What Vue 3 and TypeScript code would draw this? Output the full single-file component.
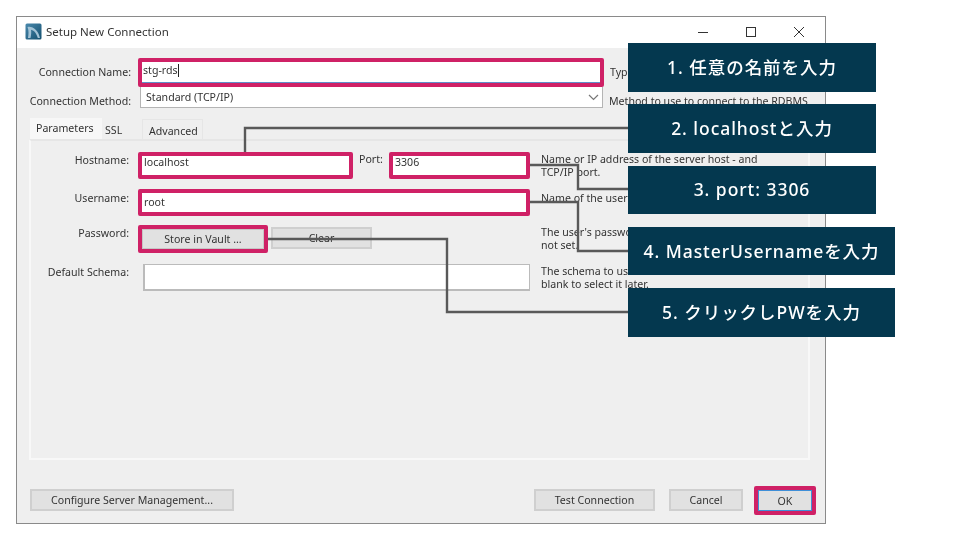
<template>
  <div class="page">
    <div class="window">
      <div class="title-bar">
        <svg class="app-icon" width="17" height="17" viewBox="0 0 17 17">
          <defs>
            <linearGradient id="iconBg" x1="0" y1="0" x2="1" y2="1">
              <stop offset="0" stop-color="#4a89ad" />
              <stop offset="1" stop-color="#14506f" />
            </linearGradient>
          </defs>
          <rect x="0.5" y="0.5" width="16" height="16" rx="1.5" fill="url(#iconBg)" />
          <path d="M3 15 C3.5 11 4 8 2.5 4 C8 3 13 7 15 15 L12.8 15 C11.5 11 9.5 7.5 6 6.8 C6.5 9 6.2 12 5.5 15 Z" fill="#a3c3d6" />
        </svg>
        <span class="title">Setup New Connection</span>
        <div class="win-buttons">
          <svg width="12" height="12" viewBox="0 0 12 12"><path d="M1 6.5H11" stroke="#333" fill="none" /></svg>
          <svg width="12" height="12" viewBox="0 0 12 12"><rect x="1.5" y="1.5" width="9" height="9" stroke="#333" fill="none" /></svg>
          <svg width="12" height="12" viewBox="0 0 12 12"><path d="M1 1L11 11M11 1L1 11" stroke="#333" fill="none" /></svg>
        </div>
      </div>

      <div class="body">
        <div class="top-form">
          <label class="top-label">Connection Name:</label>
          <div class="name-input">stg-rds<i class="caret"></i></div>
          <span class="top-hint">Type a name for the connection</span>
          <label class="top-label lower">Connection Method:</label>
          <div class="combo">
            <span>Standard (TCP/IP)</span>
            <svg width="11" height="7" viewBox="0 0 11 7"><path d="M1 1L5.5 5.5L10 1" stroke="#777" stroke-width="1.2" fill="none" /></svg>
          </div>
          <span class="top-hint lower">Method to use to connect to the RDBMS</span>
        </div>

        <div class="tabs">
          <div class="tab active">Parameters</div>
          <div class="tab ssl">SSL</div>
          <div class="tab advanced">Advanced</div>
        </div>

        <div class="panel">
          <div class="params">
            <label class="field-label">Hostname:</label>
            <div class="host-row">
              <div class="input marked host">localhost</div>
              <label class="port-label">Port:</label>
              <div class="input marked port">3306</div>
            </div>
            <div class="hint">Name or IP address of the server host - and<br />TCP/IP port.</div>

            <label class="field-label user-label">Username:</label>
            <div class="input marked user">root</div>
            <div class="hint user-hint">Name of the user to connect with.</div>

            <label class="field-label">Password:</label>
            <div class="pass-row">
              <button class="btn store">Store in Vault ...</button>
              <button class="btn clear">Clear</button>
            </div>
            <div class="hint">The user's password. Will be requested later if it's<br />not set.</div>

            <label class="field-label">Default Schema:</label>
            <div class="input schema"></div>
            <div class="hint">The schema to use as default schema. Leave<br />blank to select it later.</div>
          </div>
        </div>

        <div class="footer">
          <button class="btn configure">Configure Server Management...</button>
          <button class="btn test">Test Connection</button>
          <button class="btn cancel">Cancel</button>
          <button class="btn ok">OK</button>
        </div>
      </div>
    </div>

    <!-- 引き出し線 -->
    <svg class="leaders" width="960" height="540" viewBox="0 0 960 540">
      <path v-for="(d, index) in leaders" :key="index" :d="d" />
    </svg>

    <div class="callouts">
      <div v-for="item in callouts" :key="item.text" class="callout" :class="{ wide: item.wide }">{{ item.text }}</div>
    </div>
  </div>
</template>

<script setup lang="ts">
interface Callout {
  text: string
  wide?: boolean
}

const callouts: Callout[] = [
  { text: "1. 任意の名前を入力" },
  { text: "2. localhostと入力" },
  { text: "3. port: 3306" },
  { text: "4. MasterUsernameを入力", wide: true },
  { text: "5. クリックしPWを入力", wide: true },
]

const leaders: string[] = [
  "M245 152V128H628",
  "M530 165H578V189H628",
  "M530 202H578V251H628",
  "M268 239H447V312H628",
]
</script>

<style>
html,
body {
  background: #ffffff;
}
</style>

<style scoped>
.page {
  position: relative;
  width: 960px;
  height: 540px;
  padding: 16px;
  box-sizing: border-box;
  overflow: hidden;
  background: #ffffff;
  font-family: "Noto Sans", "Liberation Sans", sans-serif;
  font-size: 10.6px;
  color: #333333;
  filter: blur(0.35px);
}

.window {
  width: 810px;
  height: 508px;
  box-sizing: border-box;
  border: 1px solid #8a8a8a;
  display: flex;
  flex-direction: column;
  background: #efefef;
}

.title-bar {
  height: 31px;
  flex: none;
  background: #ffffff;
  display: flex;
  align-items: center;
  padding: 0 0 2px 8px;
  box-sizing: border-box;
}

.app-icon {
  margin-right: 4px;
}

.title {
  font-size: 11.5px;
  color: #333333;
}

.win-buttons {
  margin-left: auto;
  margin-right: 20px;
  display: flex;
  gap: 36px;
}

.body {
  flex: 1;
  display: flex;
  flex-direction: column;
  min-height: 0;
}

.top-form {
  margin-top: 9px;
  display: grid;
  grid-template-columns: 114px 466px 1fr;
  grid-template-rows: 30px 21px;
  align-items: center;
}

.top-label {
  text-align: right;
  white-space: nowrap;
}

.name-input {
  margin-left: 7px;
  width: 466px;
  height: 29px;
  box-sizing: border-box;
  border: 4px solid #cf2166;
  border-radius: 2px;
  background: #ffffff;
  box-shadow: inset 0 -1px 0 #5f8fca;
  line-height: 16px;
  padding-left: 1px;
}

.caret {
  display: inline-block;
  width: 1px;
  height: 13px;
  background: #222222;
  vertical-align: -3px;
}

.combo {
  margin-left: 9px;
  width: 463px;
  height: 21px;
  box-sizing: border-box;
  border: 1px solid #b4b4b4;
  border-width: 0 1px 1px 1px;
  background: #ffffff;
  display: flex;
  align-items: center;
  justify-content: space-between;
  padding: 0 3px 0 5px;
}

.top-hint {
  white-space: nowrap;
  margin-left: 13px;
}

.lower {
  position: relative;
  top: 3px;
}

.top-hint.lower {
  margin-left: 12px;
}

.tabs {
  display: flex;
  margin: 10px 0 0 13px;
  height: 21px;
  flex: none;
}

.tab {
  box-sizing: border-box;
  line-height: 20px;
}

.tab.active {
  width: 72px;
  background: #f7f7f7;
  padding-left: 6px;
}

.tab.ssl {
  width: 41px;
  margin-top: 1px;
  padding: 1px 0 0 3px;
  border-right: 1px solid #e6e6e6;
}

.tab.advanced {
  width: 60px;
  margin-top: 1px;
  padding: 1px 0 0 6px;
  border: 1px solid #e6e6e6;
  border-width: 1px 1px 0 0;
}

.panel {
  flex: 1;
  margin: 0 15px 0 12px;
  border: 2px solid #f8f8f8;
  border-top-color: #e6e6e6;
  padding-top: 11px;
  box-sizing: border-box;
  min-height: 0;
}

.params {
  display: grid;
  grid-template-columns: 98px 392px 1fr;
  column-gap: 0;
  grid-template-rows: 37px 36px 39px 27px;
  align-items: start;
}

.field-label {
  text-align: right;
  line-height: 16px;
  white-space: nowrap;
}

.user-label {
  line-height: 18px;
}

.host-row,
.pass-row {
  display: flex;
  align-items: flex-start;
  margin-left: 9px;
  width: 392px;
}

.input {
  height: 27px;
  box-sizing: border-box;
  background: #ffffff;
  line-height: 13px;
  padding-left: 2px;
}

.input.marked {
  margin-left: 9px;
  width: 392px;
  border: 4px solid #cf2166;
  border-radius: 2px;
}

.input.user {
  line-height: 18px;
}

.input.host {
  margin-left: 0;
  width: 215px;
  flex: none;
}

.port-label {
  width: 30px;
  margin-left: 6px;
  line-height: 15px;
  flex: none;
}

.input.port {
  margin-left: 0;
  width: 141px;
  flex: none;
}

.input.schema {
  margin-left: 14px;
  width: 387px;
  border: 2px solid #bbbbbb;
  border-width: 1px 1px 2px 2px;
}

.hint {
  margin: 1px 0 0 20px;
  line-height: 13px;
  white-space: nowrap;
}

.user-hint {
  margin-top: 3px;
}

.btn {
  font: inherit;
  color: inherit;
  background: #e1e1e1;
  border: 2px solid #cfcfcf;
  padding: 0;
  height: 22px;
  box-sizing: border-box;
}

.btn.store {
  width: 130px;
  height: 28px;
  border: 4px solid #cf2166;
  border-radius: 2px;
  box-shadow: inset 0 0 0 1px #c6c6c6;
}

.btn.clear {
  width: 101px;
  margin: 2px 0 0 3px;
}

.footer {
  display: flex;
  align-items: flex-start;
  flex: none;
  height: 22px;
  margin: 29px 0 12px 13px;
}

.btn.configure {
  width: 204px;
  margin-right: auto;
}

.btn.test {
  width: 121px;
  margin-right: 14px;
}

.btn.cancel {
  width: 74px;
  margin-right: 11px;
}

.btn.ok {
  width: 62px;
  height: 29px;
  margin: -3px 9px 0 0;
  border: 4px solid #cf2166;
  border-radius: 2px;
  box-shadow: inset 0 0 0 1px #3f8fd8;
}

.leaders {
  position: absolute;
  left: 0;
  top: 0;
}

.leaders path {
  fill: none;
  stroke: #595959;
  stroke-width: 2.4;
}

.callouts {
  position: absolute;
  left: 628px;
  top: 43px;
  display: flex;
  flex-direction: column;
  align-items: flex-start;
  gap: 12.75px;
}

.callout {
  width: 248px;
  height: 48.5px;
  box-sizing: border-box;
  padding-bottom: 2px;
  background: #04384f;
  color: #ffffff;
  font-family: "Noto Sans", "Noto Sans CJK JP", sans-serif;
  font-size: 17.5px;
  font-weight: 500;
  letter-spacing: 0.95px;
  display: flex;
  align-items: center;
  justify-content: center;
}

.callout.wide {
  width: 267px;
}
</style>
